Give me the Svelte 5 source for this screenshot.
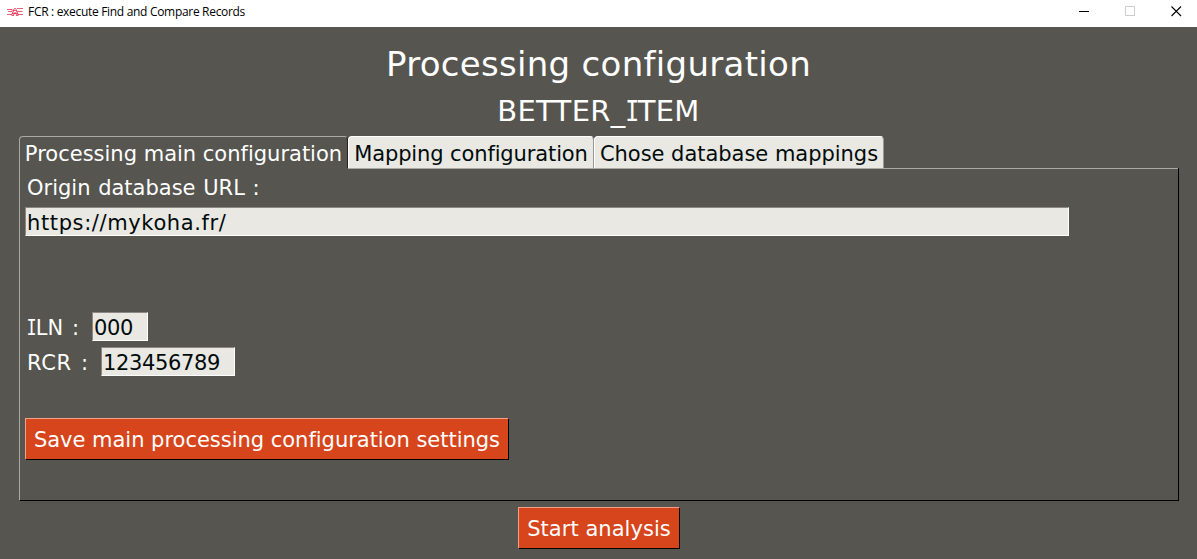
<script>
  let url = $state('https://mykoha.fr/');
  let iln = $state('000');
  let rcr = $state('123456789');
</script>

<div class="window">
  <header class="titlebar">
    <svg class="logo" width="16" height="10" viewBox="0 0 16 10" fill="none" stroke="#e5294f" stroke-width="1">
      <path d="M0 2.5h5M1 4.500h4M0 7.500h5M10 1.500h6M10.500 4.500h5M10.500 7.500h5.500" opacity=".75" />
      <path d="M4.500 8.500l2-5.500 1.500-2 1.500 2 2 5.500M5 6.500h6M3.500 2.500l3 1M6 4.500l4 3.500M10 4.500l-4 3.500M6 3.500h4M5 8.500h2M9 8.500h2" opacity=".75" />
    </svg>
    <span class="caption">FCR : execute Find and Compare Records</span>
    <div class="controls">
      <svg width="11" height="11" viewBox="0 0 11 11"><path d="M0 5.500h10" stroke="#000" /></svg>
      <svg width="11" height="11" viewBox="0 0 11 11"><path d="M.5 .5h9v9h-9z" fill="none" stroke="#ccc" /></svg>
      <svg width="11" height="11" viewBox="0 0 11 11"><path d="M.5 .5l9.500 9.500M10 .5L.5 10" stroke="#000" stroke-width="1.1" /></svg>
    </div>
  </header>

  <main>
    <h1>Processing configuration</h1>
    <h2>BETTER_<span class="bar-i">I</span>TEM</h2>

    <nav class="tabs">
      <button class="tab active">Processing main configuration</button>
      <button class="tab second">Mapping configuration</button>
      <button class="tab third">Chose database mappings</button>
    </nav>

    <section class="panel">
      <label class="url-label" for="url">Origin database URL :</label>
      <input id="url" class="url" bind:value={url} />
      <div class="row iln">
        <label for="iln"><span class="bar-i">I</span>LN :</label>
        <input id="iln" class="short" bind:value={iln} />
      </div>
      <div class="row rcr">
        <label for="rcr">RCR :</label>
        <input id="rcr" class="medium" bind:value={rcr} />
      </div>
      <button class="action save">Save main processing configuration settings</button>
    </section>

    <button class="action start">Start analysis</button>
  </main>
</div>

<style>
  :global(body) { margin: 0; overflow: hidden; }
  .window {
    box-sizing: border-box;
    width: 1197px;
    height: 559px;
    background: #565550;
    color: #fff;
    font: 21px/30px "DejaVu Sans", sans-serif;
    font-variant-ligatures: none;
  }
  .titlebar {
    box-sizing: border-box;
    display: flex;
    height: 27px;
    padding: 0 15px 4px 7px;
    align-items: center;
    background: #fff;
    color: #000;
  }
  .caption {
    margin: 1px 0 0 5px;
    font: 12px/16px "Open Sans", sans-serif;
    letter-spacing: -0.31px;
  }
  .controls { display: flex; gap: 35px; margin-left: auto; }
  svg { display: block; }
  main { display: flex; flex-direction: column; }
  h1, h2 { margin: 0; font-weight: 400; text-align: center; }
  h1 { margin-top: 12px; font-size: 34px; line-height: 50px; letter-spacing: 0.3px; }
  h2 { font-size: 29px; line-height: 44px; letter-spacing: 0.3px; }
  .bar-i {
    display: inline-block;
    width: 0.421em;
    text-indent: -0.09em;
    font-family: "DejaVu Sans Mono", monospace;
    line-height: 1;
    transform: scaleX(0.8);
  }
  button, input { font: inherit; letter-spacing: inherit; }
  .tabs { display: flex; height: 32px; margin: 3px 0 0 19px; }
  .tab {
    box-sizing: border-box;
    height: 32px;
    padding: 2px 0 0;
    border: 1px solid #989793;
    border-top-color: #fff;
    border-bottom: 0;
    border-left-color: #fff;
    border-radius: 4px 4px 0 0;
    background: #e9e8e3;
    color: #000b0b;
    line-height: 30px;
    white-space: nowrap;
  }
  .active {
    width: 329px;
    padding-right: 0;
    border-color: #aaa9a6;
    border-right-color: #222;
    background: #565550;
    color: #fff;
  }
  .second { width: 246px; letter-spacing: -0.12px; }
  .third { width: 290px; letter-spacing: -0.03px; }
  .panel {
    box-sizing: border-box;
    display: flex;
    flex-direction: column;
    align-items: flex-start;
    width: 1160px;
    height: 333px;
    margin-left: 19px;
    padding: 5px 5px 0;
    border: 1px solid #000;
    border-left-color: #aaa9a6;
    border-top: 0;
    background: linear-gradient(#aaa9a6, #aaa9a6) 328px 0 / 830px 1px no-repeat;
  }
  label { margin-left: 2px; white-space: pre; }
  input {
    box-sizing: border-box;
    height: 29px;
    padding: 2px 1px 0;
    border: 1px solid #fff;
    border-top-color: #8b8883;
    border-left-color: #8b8883;
    border-radius: 0;
    background: #e9e8e3;
    color: #000b0b;
    line-height: 25px;
  }
  .url-label { letter-spacing: 0; word-spacing: 1px; }
  .url { width: 1044px; margin-top: 4px; letter-spacing: 0.62px; }
  .row { display: flex; align-items: flex-start; height: 29px; }
  .row label { box-sizing: border-box; word-spacing: 2px; line-height: 32px; }
  .iln { margin-top: 76px; }
  .iln label { width: 65px; }
  .rcr { margin-top: 6px; }
  .rcr label { width: 74px; letter-spacing: 0.6px; }
  .short { width: 56px; letter-spacing: -0.36px; }
  .medium { width: 134px; letter-spacing: -0.36px; }
  .action {
    box-sizing: border-box;
    height: 42px;
    padding: 1px 0 0;
    border: 1px solid #000;
    border-top-color: #f3a18b;
    border-left-color: #f3a18b;
    border-radius: 0;
    background: #d7451c;
    color: #fff;
    white-space: nowrap;
  }
  .save { width: 484px; margin-top: 42px; letter-spacing: -0.02px; }
  .start { width: 162px; margin: 6px 0 0 518px; letter-spacing: 0.05px; }
</style>
